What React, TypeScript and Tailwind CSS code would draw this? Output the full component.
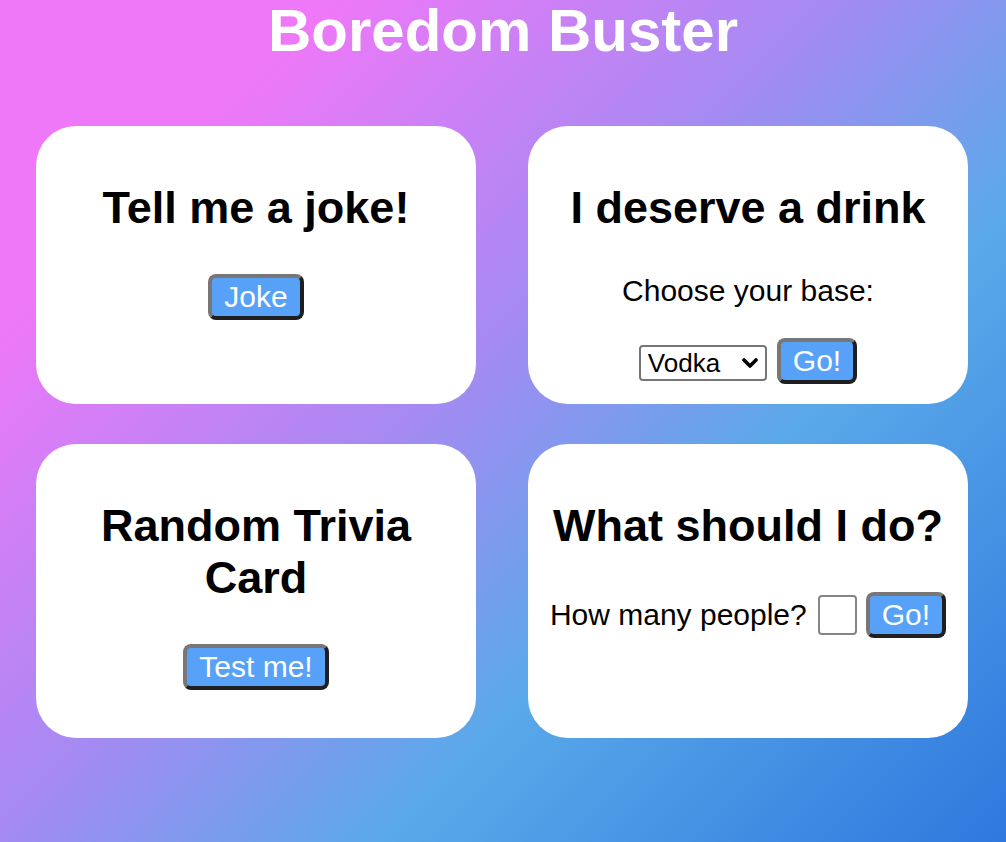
import { useState } from 'react';

const btn =
  'rounded-[8px] border-4 border-t-[#777] border-l-[#777] border-b-[#1f1f1f] border-r-[#1f1f1f] bg-[#58a1f8] px-[12px] py-[2px] text-[30px] leading-[34px] text-white';

function Card({ title, children, className = '' }: { title: string; children: React.ReactNode; className?: string }) {
  return (
    <section className={`flex flex-col items-center rounded-[40px] bg-white px-[20px] pt-[56px] pb-[20px] text-center ${className}`}>
      <h2 className="text-[45px] font-bold leading-[52px] text-black">{title}</h2>
      {children}
    </section>
  );
}

export default function App() {
  const [base, setBase] = useState('Vodka');

  return (
    <main className="min-h-screen bg-[linear-gradient(135deg,#ee78f8_18%,#a58af2_45%,#5aa9e9_66%,#2f78de_100%)] pt-px font-['Liberation_Sans',Arial,sans-serif]">
      <h1 className="text-center text-[60px] font-bold leading-[60px] text-white">Boredom Buster</h1>

      <div className="mt-[65px] grid grid-cols-[440px_440px] gap-x-[52px] gap-y-[40px] px-[36px]">
        {/* Joke */}
        <Card title="Tell me a joke!">
          <button className={`${btn} mt-[40px] mb-[28px]`}>Joke</button>
        </Card>

        {/* Drink */}
        <Card title="I deserve a drink">
          <p className="mt-[40px] text-[30px] leading-[34px] text-black">Choose your base:</p>
          <div className="mt-[30px] flex items-center gap-[10px]">
            <div className="relative mt-[4px]">
              <select
                value={base}
                onChange={e => setBase(e.target.value)}
                className="h-[36px] w-[128px] appearance-none rounded-[4px] border-2 border-[#767676] bg-white pl-[7px] text-[26px] leading-[30px] text-black"
              >
                <option>Vodka</option>
                <option>Gin</option>
                <option>Rum</option>
                <option>Tequila</option>
                <option>Whiskey</option>
              </select>
              <svg className="pointer-events-none absolute right-[9px] top-[13px]" width="16" height="11" viewBox="0 0 16 11">
                <path d="M2 2 L8 8 L14 2" fill="none" stroke="#000" strokeWidth="3.6" strokeLinecap="round" strokeLinejoin="round" />
              </svg>
            </div>
            <button className={btn}>Go!</button>
          </div>
        </Card>

        {/* Trivia */}
        <Card title="Random Trivia Card">
          <button className={`${btn} mt-[40px] mb-[28px] px-[10px]`}>Test me!</button>
        </Card>

        {/* Activity */}
        <Card title="What should I do?">
          <div className="mt-[40px] flex items-center">
            <span className="text-[30px] leading-[34px] text-black">How many people?</span>
            <input
              type="text"
              className="ml-[11px] h-[40px] w-[39px] rounded-[4px] border-2 border-[#858585] bg-white"
            />
            <button className={`${btn} ml-[9px]`}>Go!</button>
          </div>
        </Card>
      </div>
    </main>
  );
}
